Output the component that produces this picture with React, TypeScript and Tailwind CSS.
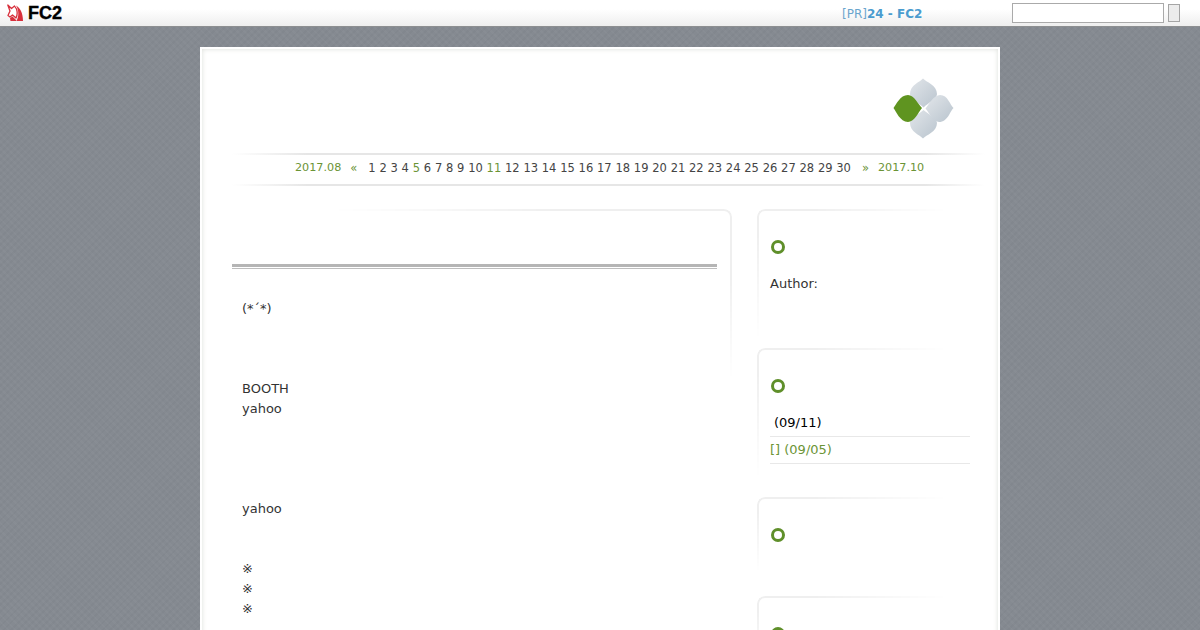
const days = Array.from({ length: 30 }, (_, i) => i + 1)

function FadeLine() {
  return <div className="h-[2px] w-full bg-[linear-gradient(to_right,transparent,#e6e6e6_10%,#e6e6e6_92%,transparent)]" />
}

function Ring() {
  return <div className="ml-[1px] h-[14px] w-[14px] rounded-full border-[3.5px] border-[#5f8f2a]" />
}

function SidePanel({ height, fade, children }: { height: string; fade: string; children?: React.ReactNode }) {
  return (
    <div className={`relative pl-[13px] pt-[31px] ${height}`}>
      <div className={`pointer-events-none absolute left-0 top-0 w-[190px] rounded-tl-[8px] border-l-2 border-t-2 border-[#efefef] [mask-composite:intersect] [mask-image:linear-gradient(to_right,black_30%,transparent),linear-gradient(to_bottom,black_20%,transparent)] ${fade}`} />
      <Ring />
      {children}
    </div>
  )
}

function Flower() {
  return (
    <svg width="62" height="62" viewBox="0 0 62 62">
      <defs>
        <linearGradient id="petal" x1="0" y1="0" x2="1" y2="1">
          <stop offset="0" stopColor="#e2e6ea" />
          <stop offset="1" stopColor="#b9c4ce" />
        </linearGradient>
      </defs>
      <path d="M30 0.5 C33 4 44 7 44 16 C44 21 35 25 30.5 29.5 C26 25 17 21 17 16 C17 7 27 4 30 0.5Z" fill="url(#petal)" />
      <path d="M60.5 30 C57 33 55 44 46 44 C41 44 36 35 32.5 30.5 C36 26 41 17 47 17 C55 17 57 27 60.5 30Z" fill="url(#petal)" />
      <path d="M30 60.5 C27 57 17 54 17 45 C17 40 26 36 30.5 32 C35 36 44 40 44 45 C44 54 33 57 30 60.5Z" fill="url(#petal)" />
      <path d="M0.5 30 C3 27 7 17 15 17 C21 17 25 26 29 30 C25 35 21 44 15 44 C7 44 3 33 0.5 30Z" fill="#5f9420" />
    </svg>
  )
}

function FcIcon() {
  return (
    <svg width="17" height="18" viewBox="0 0 17 18">
      <path
        d="M0.8 1 L4.5 4.5 L7.5 2 L9.5 5 C10.5 8 10.5 11 9 14 L5.5 11 L3 13 L1 11.5 L3 7 Z"
        fill="#fff"
        stroke="#d8303c"
        strokeWidth="1.3"
        strokeLinejoin="round"
      />
      <path d="M9 1.5 C13 3.5 16 9 16 17 L9.5 17 C12 13 12 6 9 1.5Z" fill="#d8303c" />
      <path d="M3 14 L5.5 12.5 L9 16 L9.5 17 L3.5 17Z" fill="#d8303c" />
    </svg>
  )
}

export default function App() {
  return (
    <div className="h-[630px] overflow-hidden bg-[#858a91] bg-[repeating-linear-gradient(45deg,rgba(255,255,255,0.025)_0_2px,transparent_2px_5px),repeating-linear-gradient(-45deg,rgba(0,0,0,0.025)_0_2px,transparent_2px_5px)] font-['DejaVu_Sans',sans-serif] text-[13px] leading-[20px] text-[#333]">
      {/* FC2 bar */}
      <div className="flex h-[27px] items-center border-b border-[#8d8f91] bg-[linear-gradient(to_bottom,#ffffff,#ffffff_35%,#eeeeee)]">
        <div className="flex w-[842px] items-center pl-[7px]">
          <FcIcon />
          <span className="ml-[4px] font-['Liberation_Sans',sans-serif] text-[18px] font-bold leading-none text-black [-webkit-text-stroke:0.4px_black]">FC2</span>
        </div>
        <div className="w-[170px] pt-[1px] text-[12px] text-[#6aa5cd]">
          [PR]<span className="font-bold text-[#4a9ccf]">24 - FC2</span>
        </div>
        <input className="h-[20px] w-[152px] border border-[#aaaaaa] bg-white" />
        <button className="ml-[4px] h-[18px] w-[12px] border border-[#a5a5a5] bg-[#ececec]" />
      </div>

      {/* page */}
      <div className="mx-auto mt-[20px] h-[600px] w-[800px] border-2 border-white bg-white shadow-[inset_0_0_5px_#dcdfd9]">
        <div className="flex justify-end pr-[43px] pt-[29px]">
          <Flower />
        </div>

        {/* calendar */}
        <div className="ml-[30px] mr-[13px] mt-[13px]">
          <FadeLine />
          <div className="flex h-[29px] items-center pb-[4px] pl-[63px] text-[11.5px] text-[#444]">
            <span className="text-[11.2px] text-[#6b9436]">2017.08</span>
            <span className="ml-[9px] text-[#6b9436]">«</span>
            <span className="ml-[11px] flex gap-[3.77px]">
              {days.map((d) => (
                <span key={d} className={d === 5 || d === 11 ? 'text-[#6b9436]' : ''}>
                  {d}
                </span>
              ))}
            </span>
            <span className="ml-[11px] text-[#6b9436]">»</span>
            <span className="ml-[9px] text-[11.2px] text-[#6b9436]">2017.10</span>
          </div>
          <FadeLine />
        </div>

        <div className="ml-[30px] mt-[23px] flex gap-[25px]">
          {/* entry */}
          <div className="relative w-[500px]">
            <div className="pointer-events-none absolute left-0 top-0 h-[170px] w-[500px] rounded-tr-[8px] border-r-2 border-t-2 border-[#efefef] [mask-composite:intersect] [mask-image:linear-gradient(to_left,black_35%,transparent_80%),linear-gradient(to_bottom,black_40%,transparent)]" />
            <div className="mt-[55px] h-[5px] w-[485px] border-b border-t-[3px] border-b-[#bdbdbd] border-t-[#b5b5b5]" />
            <div className="mt-[30px] pl-[10px]">
              <div>(*´*)</div>
              <div className="mt-[60px]">BOOTH</div>
              <div>yahoo</div>
              <div className="mt-[80px]">yahoo</div>
              <div className="mt-[40px]">※</div>
              <div>※</div>
              <div>※</div>
            </div>
          </div>

          {/* sidebar */}
          <div className="w-[215px]">
            <SidePanel height="h-[139px]" fade="h-[130px]">
              <div className="mt-[20px]">Author:</div>
            </SidePanel>
            <SidePanel height="h-[149px]" fade="h-[130px]">
              <div className="mt-[17px] w-[200px]">
                <div className="h-[27px] border-b border-[#e8e8e8] pl-[4px] pt-[3px] text-black">(09/11)</div>
                <div className="h-[27px] border-b border-[#e8e8e8] pt-[3px] text-[#6b9436]">[] (09/05)</div>
              </div>
            </SidePanel>
            <SidePanel height="h-[99px]" fade="h-[75px]" />
            <SidePanel height="h-[99px]" fade="h-[75px]" />
          </div>
        </div>
      </div>
    </div>
  )
}
